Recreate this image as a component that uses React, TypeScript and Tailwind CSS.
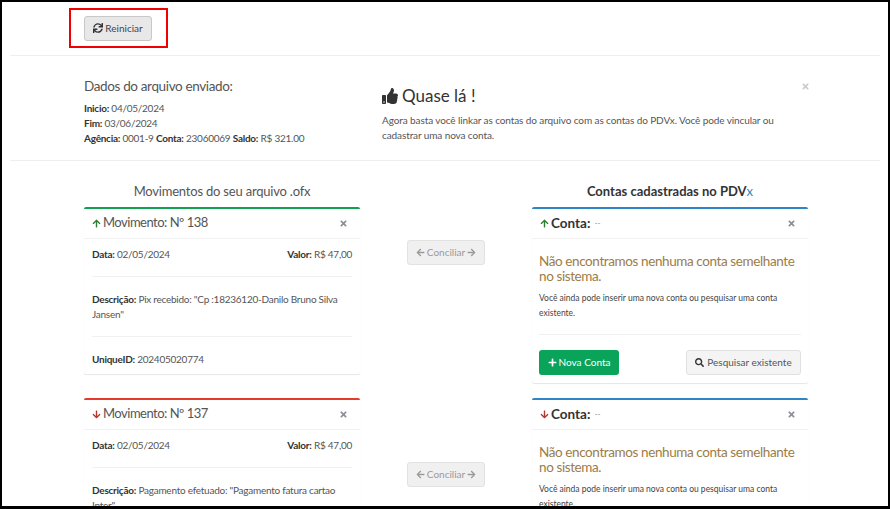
import { FaArrowDown, FaArrowLeft, FaArrowRight, FaArrowUp, FaPlus, FaSearch, FaSync, FaThumbsUp, FaTimes } from "react-icons/fa";

function ConciliarButton() {
  return (
    <button className="flex h-[25px] w-[78px] items-center justify-center gap-[2px] rounded-[3px] border border-[#e2e2e2] bg-[#f0f0f0] text-[10px] text-[#9a9a9a]">
      <FaArrowLeft className="text-[9px]" />
      Conciliar
      <FaArrowRight className="text-[9px]" />
    </button>
  );
}

function CardHeader({ up, children }: { up: boolean; children: React.ReactNode }) {
  return (
    <div className="flex h-[30px] items-center justify-between border-b border-[#f2f2f2] pb-[1px] pl-2 pr-3">
      <div className="flex items-center gap-[2px]">
        {up ? <FaArrowUp className="text-[9px] text-[#2f7d32]" /> : <FaArrowDown className="text-[9px] text-[#b5372c]" />}
        {children}
      </div>
      <FaTimes className="text-[9px] text-[#8a8f99]" />
    </div>
  );
}

function Movimento({ numero, up, descricao, uniqueId }: { numero: number; up: boolean; descricao: string; uniqueId?: string }) {
  return (
    <div className={`rounded-[2px] border-t-2 shadow-[0_1px_1px_rgba(0,0,0,0.1)] ${up ? "border-[#12a150]" : "border-[#e5392b]"}`}>
      <CardHeader up={up}>
        <span className="text-[13px] tracking-[-0.5px] text-[#555]">Movimento: Nº {numero}</span>
      </CardHeader>
      <div className="px-2 text-[10px] tracking-[-0.25px] text-[#555]">
        <div className="flex h-[38px] items-start justify-between border-b border-[#f0f0f0] pt-[8px]">
          <span><b className="text-[#333]">Data:</b> 02/05/2024</span>
          <span><b className="text-[#333]">Valor:</b> R$ 47,00</span>
        </div>
        <div className="h-[60px] border-b border-[#f0f0f0] pt-[15px] leading-[15px]">
          <b className="text-[#333]">Descrição:</b> {descricao}
        </div>
        {uniqueId && (
          <div className="h-[37px] pt-[15px] leading-[15px]">
            <b className="text-[#333]">UniqueID:</b> {uniqueId}
          </div>
        )}
      </div>
    </div>
  );
}

function Conta({ up, actions }: { up: boolean; actions: boolean }) {
  return (
    <div className="rounded-[2px] border-t-2 border-[#2f86c5] shadow-[0_1px_1px_rgba(0,0,0,0.1)]">
      <CardHeader up={up}>
        <span className="text-[13.5px] font-bold text-[#333]">Conta:</span>
        <span className="ml-[2px] text-[8px] text-[#888]">--</span>
      </CardHeader>
      <div className="px-[7px]">
        <h4 className="pt-[15px] text-[13.5px] leading-[15px] tracking-[-0.4px] text-[#9c7c48]">Não encontramos nenhuma conta semelhante no sistema.</h4>
        <p className="mt-[7px] border-b border-[#f0f0f0] pb-[13px] text-[8.5px] leading-[15px] text-[#444]">
          Você ainda pode inserir uma nova conta ou pesquisar uma conta existente.
        </p>
        {actions && (
          <div className="flex h-[48px] items-start justify-between pt-[15px]">
            <button className="flex h-[25px] w-[80px] items-center justify-center gap-[2px] rounded-[3px] bg-[#0aa35a] text-[10px] text-white">
              <FaPlus className="text-[9px]" />
              Nova Conta
            </button>
            <button className="flex h-[25px] w-[115px] items-center justify-center gap-[3px] rounded-[3px] border border-[#e0e0e0] bg-[#f4f4f4] text-[10px] text-[#555]">
              <FaSearch className="text-[9px] text-[#333]" />
              Pesquisar existente
            </button>
          </div>
        )}
      </div>
    </div>
  );
}

export default function App() {
  return (
    <div className="h-[509px] w-[890px] overflow-hidden border-b-[3px] border-l-2 border-r-2 border-t-2 border-black bg-white font-['Lato',sans-serif]">
      <div className="mx-[8px] h-[54px] border-b border-[#eee] pl-[59px] pt-[6px]">
        <div className="flex h-[40px] w-[99px] items-center border-2 border-[#f00000] pl-[13px]">
          <button className="flex h-[25px] w-[68px] items-center justify-center gap-[2px] rounded-[3px] border border-[#c8c8c8] bg-[#e8e8e8] text-[10px] text-[#444]">
            <FaSync className="text-[10px] text-[#333]" />
            Reiniciar
          </button>
        </div>
      </div>

      <div className="mx-[8px] flex h-[105px] border-b border-[#eee] pl-[74px]">
        <div className="w-[298px] pt-[21px] text-[10px] leading-[15px] tracking-[-0.25px] text-[#555]">
          <h3 className="mb-[6px] text-[13.5px] leading-[18px] tracking-[-0.36px]">Dados do arquivo enviado:</h3>
          <div><b className="text-[#333]">Inicio:</b> 04/05/2024</div>
          <div><b className="text-[#333]">Fim:</b> 03/06/2024</div>
          <div>
            <b className="text-[#333]">Agência:</b> 0001-9 <b className="text-[#333]">Conta:</b> 23060069{" "}
            <b className="text-[#333]">Saldo:</b> R$ 321.00
          </div>
        </div>
        <div className="w-[419px] pt-[29px]">
          <div className="flex items-center gap-[4px] text-[17px] leading-[22px] text-[#333]">
            <FaThumbsUp className="text-[16px]" />
            Quase lá !
          </div>
          <p className="mt-[6px] text-[10px] leading-[15px] tracking-[-0.1px] text-[#555]">
            Agora basta você linkar as contas do arquivo com as contas do PDVx. Você pode vincular ou cadastrar uma nova conta.
          </p>
        </div>
        <FaTimes className="mt-[26px] text-[9px] text-[#ccc]" />
      </div>

      <div className="flex overflow-hidden pl-[82px] pt-[22px]">
        <div className="w-[276px]">
          <h3 className="h-[24px] text-center text-[13px] leading-[16px] tracking-[-0.2px] text-[#555]">Movimentos do seu arquivo .ofx</h3>
          <Movimento numero={138} up descricao={'Pix recebido: "Cp :18236120-Danilo Bruno Silva Jansen"'} uniqueId="202405020774" />
          <div className="mt-[24px]">
            <Movimento numero={137} up={false} descricao={'Pagamento efetuado: "Pagamento fatura cartao Inter"'} />
          </div>
        </div>
        <div className="flex w-[172px] flex-col items-center gap-[197px] pt-[57px]">
          <ConciliarButton />
          <ConciliarButton />
        </div>
        <div className="w-[276px]">
          <h3 className="h-[24px] text-center text-[13px] font-bold leading-[16px] text-[#333]">
            Contas cadastradas no PDV<span className="font-normal text-[#2f86c5]">x</span>
          </h3>
          <Conta up actions />
          <div className="mt-[15px]">
            <Conta up={false} actions={false} />
          </div>
        </div>
      </div>
    </div>
  );
}
